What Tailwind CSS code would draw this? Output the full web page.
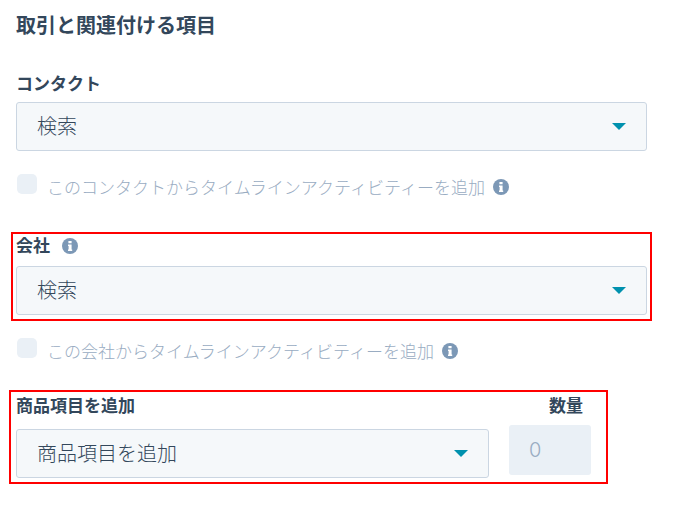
<!DOCTYPE html>
<html lang="ja">
<head>
  <meta charset="UTF-8">
  <meta name="viewport" content="width=device-width, initial-scale=1.0">
  <title>取引と関連付ける項目</title>
  <script src="https://cdn.jsdelivr.net/npm/@tailwindcss/browser@4"></script>
</head>
<body class="bg-white font-['Noto_Sans_CJK_JP',sans-serif] text-[17px] leading-6 text-[#33475b]">

  <svg class="hidden">
    <symbol id="info" viewBox="0 0 16 16">
      <circle cx="8" cy="8" r="8" fill="#7c98b6" />
      <path d="M6.4 3h3.2v2.2H6.4zM6 6.6h3.6v5h.6V13H6v-1.4h.6V8H6z" fill="#fff" />
    </symbol>
    <symbol id="caret" viewBox="0 0 14 7">
      <path d="M0 0h14L7 7z" fill="#0091ae" />
    </symbol>
  </svg>

  <form class="pt-[11px] pl-4 pr-[26px]">
    <h1 class="text-xl leading-7 font-bold">取引と関連付ける項目</h1>

    <!-- contact -->
    <section class="mt-8">
      <label for="contact" class="block font-bold">コンタクト</label>
      <div class="relative mt-[7px]">
        <select id="contact" class="block w-full h-[49px] appearance-none rounded-[3px] border border-[#cbd6e2] bg-[#f5f8fa] pl-5 pr-12 pb-[2px] text-xl font-light">
          <option>検索</option>
        </select>
        <svg class="pointer-events-none absolute right-[21px] top-[21px] w-[14px] h-[7px]"><use href="#caret" /></svg>
      </div>
    </section>

    <div class="mt-[23px] flex items-start text-[#99acc2]">
      <input type="checkbox" id="contact-timeline" disabled class="ml-px size-5 shrink-0 appearance-none rounded-[5px] bg-[#eaf0f6]">
      <label for="contact-timeline" class="ml-[10px] leading-[26px] font-light">このコンタクトからタイムラインアクティビティーを追加</label>
      <svg class="mt-[5px] ml-2 size-4 shrink-0"><use href="#info" /></svg>
    </div>

    <!-- company -->
    <section class="mt-8 -mx-[5px] border-2 border-[#f00] px-[3px] pb-1">
      <div class="flex items-center gap-3">
        <label for="company" class="pb-[2px] leading-[22px] font-bold">会社</label>
        <svg class="size-4"><use href="#info" /></svg>
      </div>
      <div class="relative mt-2">
        <select id="company" class="block w-full h-[49px] appearance-none rounded-[3px] border border-[#cbd6e2] bg-[#f5f8fa] pl-5 pr-12 pb-[2px] text-xl font-light">
          <option>検索</option>
        </select>
        <svg class="pointer-events-none absolute right-[21px] top-[21px] w-[14px] h-[7px]"><use href="#caret" /></svg>
      </div>
    </section>

    <div class="mt-[17px] flex items-start text-[#99acc2]">
      <input type="checkbox" id="company-timeline" disabled class="ml-px size-5 shrink-0 appearance-none rounded-[5px] bg-[#eaf0f6]">
      <label for="company-timeline" class="ml-[10px] leading-[26px] font-light">この会社からタイムラインアクティビティーを追加</label>
      <svg class="mt-[5px] ml-2 size-4 shrink-0"><use href="#info" /></svg>
    </div>

    <!-- line items -->
    <section class="mt-[26px] -ml-[7px] mr-[39px] flex gap-5 border-2 border-[#f00] pt-px pr-[15px] pb-1 pl-[5px]">
      <div class="flex-1">
        <label for="product" class="block font-bold">商品項目を追加</label>
        <div class="relative mt-3">
          <select id="product" class="block w-full h-[49px] appearance-none rounded-[3px] border border-[#cbd6e2] bg-[#f5f8fa] pl-5 pr-12 pb-[2px] text-xl font-light">
            <option>商品項目を追加</option>
          </select>
          <svg class="pointer-events-none absolute right-[21px] top-[21px] w-[14px] h-[7px]"><use href="#caret" /></svg>
        </div>
      </div>
      <div class="w-[82px]">
        <label for="quantity" class="block pr-2 text-right font-bold">数量</label>
        <input type="text" id="quantity" value="0" disabled class="mt-2 block w-full h-[50px] rounded-[3px] bg-[#eaf0f6] px-5 font-[Inter,sans-serif] text-xl font-light text-[#99acc2]">
      </div>
    </section>
  </form>

</body>
</html>
